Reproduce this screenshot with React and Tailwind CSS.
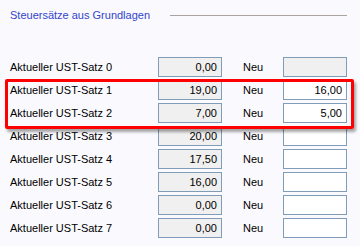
const ROWS = [
  { cur: '0,00', neu: null, disabled: true },
  { cur: '19,00', neu: '16,00' },
  { cur: '7,00', neu: '5,00' },
  { cur: '20,00', neu: '' },
  { cur: '17,50', neu: '' },
  { cur: '16,00', neu: '' },
  { cur: '0,00', neu: '' },
  { cur: '0,00', neu: '' },
];

export default function App() {
  return (
    <div
      className="relative w-[360px] h-[246px] overflow-hidden bg-[#fafafe] text-[11px] text-black"
      style={{ fontFamily: '"Liberation Sans", Arial, sans-serif' }}
    >
      {/* Group header */}
      <div className="flex items-center h-[20px] mt-[5px] pl-[10px] pr-[13px]">
        <span className="text-[#3344cc] whitespace-nowrap">Steuersätze aus Grundlagen</span>
        <div className="ml-auto w-[177px] h-px bg-[#a9a29f]" />
      </div>

      {/* Rows */}
      <div className="flex flex-col gap-[3px] mt-[32px]">
        {ROWS.map((r, i) => (
          <div key={i} className="flex items-center h-[20px]">
            <div className="w-[158px] pl-[10px] whitespace-nowrap">Aktueller UST-Satz {i}</div>
            <div className="w-[64px] h-[20px] border border-[#7f9db9] bg-[#f0f0f0] flex items-center justify-end pr-[4px]">
              {r.cur}
            </div>
            <div className="w-[61px] pl-[21px]">Neu</div>
            <div
              className={`w-[64px] h-[20px] border border-[#7f9db9] flex items-center justify-end pr-[4px] ${
                r.disabled ? 'bg-[#f0f0f0]' : 'bg-white'
              }`}
            >
              {r.neu}
            </div>
          </div>
        ))}
      </div>

      {/* Highlight */}
      <div className="absolute left-[5px] top-[79px] w-[349px] h-[50px] border-[3px] border-[#ff0000] rounded-[2px] shadow-[2px_3px_3px_rgba(0,0,0,0.35)]" />
    </div>
  );
}
